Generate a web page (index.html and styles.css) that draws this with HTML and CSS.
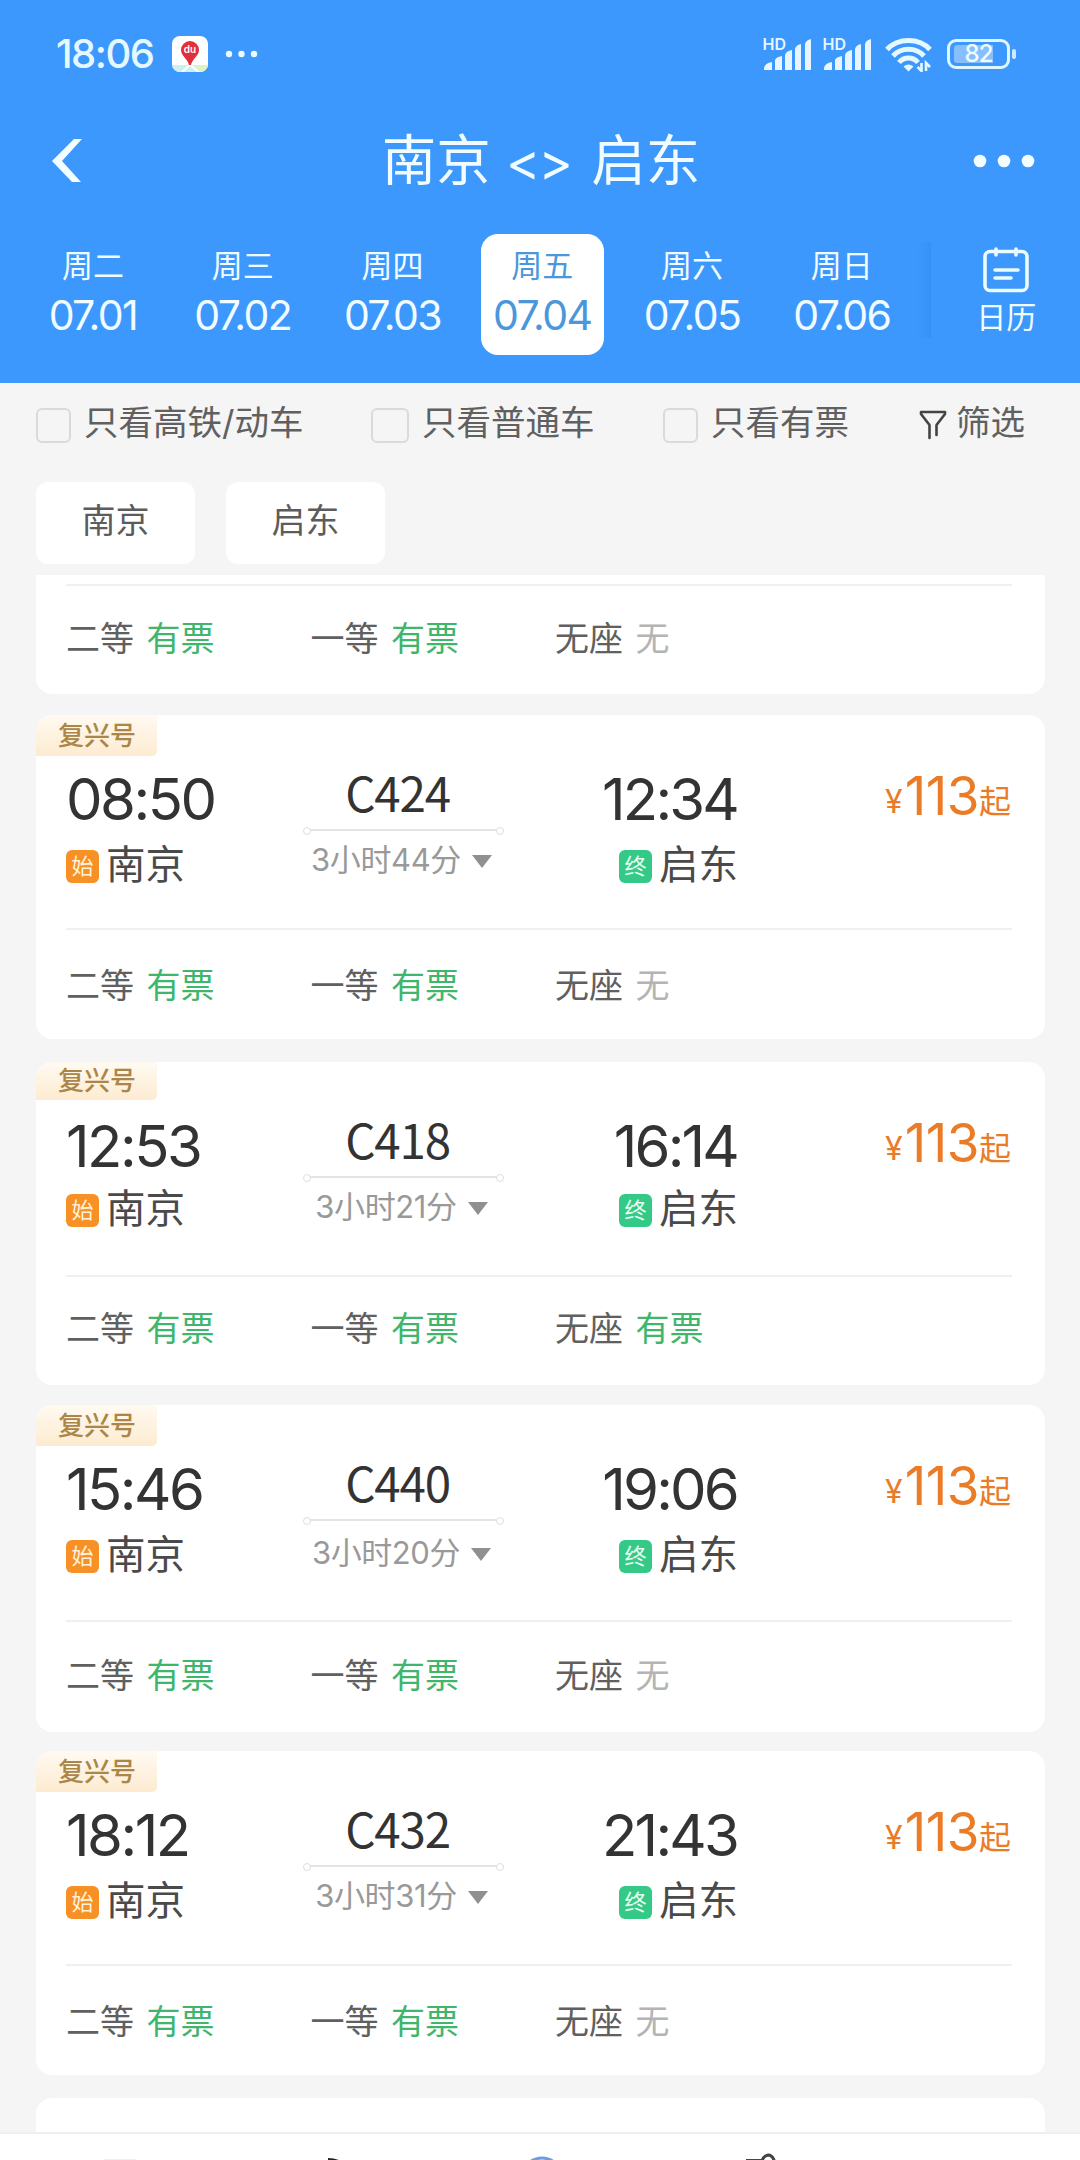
FILE: index.html
```html
<!DOCTYPE html>
<html lang="zh-CN">
<head>
    <meta charset="UTF-8" />
    <meta name="viewport" content="width=device-width, initial-scale=1.0" />
    <title>南京 - 启东</title>
    <link rel="stylesheet" href="styles.css">
</head>
<body>
  <header class="topo">
    <div class="status">
      <span class="hora">18:06</span>
      <svg class="app" width="36" height="36" viewBox="0 0 36 36">
        <rect width="36" height="36" rx="8" fill="#fff"/>
        <path d="M0 29h36a8 8 0 0 1-8 7H8a8 8 0 0 1-8-7z" fill="#cdeff0"/>
        <path d="M22 29h14a8 8 0 0 1-8 7z" fill="#dff3c0"/>
        <path d="M9 36l8-8h2l9 8h-3l-7-6-6 6z" fill="#fff"/>
        <path d="M18 5a9 9 0 0 1 9 9c0 6-7 9-8 15h-2c-1-6-8-9-8-15a9 9 0 0 1 9-9z" fill="#e0303a"/>
        <text x="18" y="17" text-anchor="middle" class="du">du</text>
      </svg>
      <svg class="pontos-status" width="34" height="8" viewBox="0 0 34 8" fill="#eaf8ff">
        <circle cx="4" cy="4" r="3.2"/><circle cx="16.5" cy="4" r="3.2"/><circle cx="29" cy="4" r="3.2"/>
      </svg>
      <div class="sinais">
        <svg width="52" height="44" viewBox="0 -4 52 44" fill="#e6f5ff">
          <text x="0.500" y="14" class="hd">HD</text>
          <path d="M2 34v-2q1-5 8-6v8q0 0-1 0H3q-1 0-1 0zM13 34V24q1-3 7-4v14zM23 34V19q1-4 7-5v20zM33 34V13q1-4 6-5v26zM43 34V8q1-4 6-5v31z"/>
        </svg>
        <svg width="52" height="44" viewBox="0 -4 52 44" fill="#e6f5ff">
          <text x="0.500" y="14" class="hd">HD</text>
          <path d="M2 34v-2q1-5 8-6v8q0 0-1 0H3q-1 0-1 0zM13 34V24q1-3 7-4v14zM23 34V19q1-4 7-5v20zM33 34V13q1-4 6-5v26zM43 34V8q1-4 6-5v31z"/>
        </svg>
        <svg class="wifi" width="47" height="36" viewBox="0 0 47 36" fill="none" stroke="#e6f8ff" stroke-width="5">
          <path d="M2 13.500C13 1.500 34 1.500 45 13.500M8 20c8-9 23-9 31 0M14 26.500c5-6 14-6 19 0"/>
          <path d="M18.500 30.500q5-4 10 0l-5 5z" fill="#e6f8ff" stroke="none"/>
          <path d="M36.500 27v8l-4-4M41 35v-8l4 4" stroke-width="2.600"/>
        </svg>
        <div class="bateria"><span>82</span></div>
      </div>
    </div>

    <div class="titulo">
      <svg width="32" height="46" viewBox="0 0 32 46" fill="#f4fdff">
        <path d="M22 1h8L10 23l19 21h-9L0 23z"/>
      </svg>
      <h1>南京 <span class="troca">&lt;&gt;</span> 启东</h1>
      <svg width="62" height="14" viewBox="0 0 62 14" fill="#f4fdff">
        <circle cx="7" cy="7" r="6.300"/><circle cx="31" cy="7" r="6.300"/><circle cx="55" cy="7" r="6.300"/>
      </svg>
    </div>

    <div class="datas">
      <div class="dia"><span>周二</span><b>07.01</b></div>
      <div class="dia"><span>周三</span><b>07.02</b></div>
      <div class="dia"><span>周四</span><b>07.03</b></div>
      <div class="dia ativo"><span>周五</span><b>07.04</b></div>
      <div class="dia"><span>周六</span><b>07.05</b></div>
      <div class="dia"><span>周日</span><b>07.06</b></div>
      <div class="sombra"></div>
      <div class="calendario">
        <svg width="46" height="46" viewBox="0 0 46 46" fill="none" stroke="#eafcff" stroke-width="3.600" stroke-linecap="round">
          <rect x="2" y="4.500" width="42" height="39" rx="5"/>
          <path d="M13 2v6M33 2v6M12 23h23M12 31h16"/>
        </svg>
        <span>日历</span>
      </div>
    </div>
  </header>

  <div class="filtros">
    <div class="opcao"><i class="caixa"></i>只看高铁/动车</div>
    <div class="opcao segunda"><i class="caixa larga"></i>只看普通车</div>
    <div class="opcao terceira"><i class="caixa"></i>只看有票</div>
    <div class="opcao filtrar">
      <svg width="28" height="30" viewBox="0 0 28 30" fill="none" stroke="#444" stroke-width="2.600" stroke-linejoin="round" stroke-linecap="round">
        <path d="M10.500 28V15L2 4V2h24v2l-8.500 11v10"/>
      </svg>筛选
    </div>
  </div>

  <div class="estacoes">
    <span>南京</span>
    <span>启东</span>
  </div>

  <main class="lista">
    <section class="cartao cortado">
      <div class="assentos">
        <span>二等 <em>有票</em></span><span>一等 <em>有票</em></span><span>无座 <em class="sem">无</em></span>
      </div>
    </section>

    <section class="cartao">
      <div class="selo">复兴号</div>
      <div class="viagem">
        <div class="saida">
          <div class="horario">08:50</div>
          <div class="local"><i>始</i>南京</div>
        </div>
        <div class="trem">
          <div class="codigo">C424</div>
          <div class="linha"></div>
          <div class="duracao">3小时44分<u></u></div>
        </div>
        <div class="chegada">
          <div class="horario">12:34</div>
          <div class="local fim"><i>终</i>启东</div>
        </div>
        <div class="preco"><small>¥</small>113<small>起</small></div>
      </div>
      <div class="assentos">
        <span>二等 <em>有票</em></span><span>一等 <em>有票</em></span><span>无座 <em class="sem">无</em></span>
      </div>
    </section>

    <section class="cartao baixo">
      <div class="selo">复兴号</div>
      <div class="viagem">
        <div class="saida">
          <div class="horario">12:53</div>
          <div class="local"><i>始</i>南京</div>
        </div>
        <div class="trem">
          <div class="codigo">C418</div>
          <div class="linha"></div>
          <div class="duracao">3小时21分<u></u></div>
        </div>
        <div class="chegada">
          <div class="horario">16:14</div>
          <div class="local fim"><i>终</i>启东</div>
        </div>
        <div class="preco"><small>¥</small>113<small>起</small></div>
      </div>
      <div class="assentos">
        <span>二等 <em>有票</em></span><span>一等 <em>有票</em></span><span>无座 <em>有票</em></span>
      </div>
    </section>

    <section class="cartao alto">
      <div class="selo">复兴号</div>
      <div class="viagem">
        <div class="saida">
          <div class="horario">15:46</div>
          <div class="local"><i>始</i>南京</div>
        </div>
        <div class="trem">
          <div class="codigo">C440</div>
          <div class="linha"></div>
          <div class="duracao">3小时20分<u></u></div>
        </div>
        <div class="chegada">
          <div class="horario">19:06</div>
          <div class="local fim"><i>终</i>启东</div>
        </div>
        <div class="preco"><small>¥</small>113<small>起</small></div>
      </div>
      <div class="assentos">
        <span>二等 <em>有票</em></span><span>一等 <em>有票</em></span><span>无座 <em class="sem">无</em></span>
      </div>
    </section>

    <section class="cartao">
      <div class="selo">复兴号</div>
      <div class="viagem">
        <div class="saida">
          <div class="horario">18:12</div>
          <div class="local"><i>始</i>南京</div>
        </div>
        <div class="trem">
          <div class="codigo">C432</div>
          <div class="linha"></div>
          <div class="duracao">3小时31分<u></u></div>
        </div>
        <div class="chegada">
          <div class="horario">21:43</div>
          <div class="local fim"><i>终</i>启东</div>
        </div>
        <div class="preco"><small>¥</small>113<small>起</small></div>
      </div>
      <div class="assentos">
        <span>二等 <em>有票</em></span><span>一等 <em>有票</em></span><span>无座 <em class="sem">无</em></span>
      </div>
    </section>

    <section class="cartao"></section>
  </main>

  <nav class="menu">
    <svg width="1080" height="27" viewBox="0 0 1080 27" fill="none" stroke-width="3">
      <path d="M104 26h32" stroke="#f0f0f0" stroke-width="2"/>
      <path d="M328 27v-3q7 0 13 3z" fill="#222"/>
      <circle cx="542" cy="44" r="20" stroke="#6f9be0"/>
      <path d="M746 26.500h16q2-5 6-5.500 4 0 6 5v3" stroke="#444"/>
    </svg>
  </nav>
</body>
</html>
```

FILE: styles.css
```css
* {
  box-sizing: border-box;
}

body {
  margin: 0;
  width: 1080px;
  height: 2160px;
  overflow: hidden;
  display: flex;
  flex-direction: column;
  background: #f5f5f5;
  color: #555;
  font-family: Inter, "Noto Sans CJK SC", sans-serif;
}

svg {
  display: block;
  flex-shrink: 0;
}

i, em, u {
  font-style: normal;
  text-decoration: none;
}

.topo {
  height: 383px;
  background: #3c98fc;
  color: #f0fcff;
  flex-shrink: 0;
}

/* barra de status */
.status {
  height: 108px;
  padding: 0 70px 0 56px;
  display: flex;
  align-items: center;
}

.hora {
  width: 116px;
  font-size: 40px;
  font-weight: 500;
  letter-spacing: -1.5px;
  line-height: 50px;
  color: #e6f8ff;
}

.pontos-status {
  margin-left: 17px;
}

.du {
  font-size: 10px;
  font-weight: 600;
  fill: #fff;
}

.hd {
  font-size: 16px;
  font-weight: 600;
}

.sinais {
  margin-left: auto;
  display: flex;
  align-items: center;
  gap: 8px;
}

.wifi {
  margin-left: 3px;
}

.bateria {
  width: 63px;
  height: 30px;
  margin-left: 7px;
  border: 3px solid #e0f6ff;
  border-radius: 9px;
  padding: 3px 4px;
  position: relative;
}

.bateria span {
  display: block;
  height: 18px;
  line-height: 18px;
  border-radius: 3px;
  text-align: center;
  font-size: 24px;
  font-weight: 500;
  letter-spacing: -1px;
  background: linear-gradient(90deg, #86bffc 80%, transparent 80%);
}

.bateria::after {
  content: "";
  position: absolute;
  right: -9px;
  top: 7px;
  width: 4px;
  height: 10px;
  border-radius: 2px;
  background: #cfeaff;
}

/* titulo */
.titulo {
  height: 106px;
  padding: 0 45px 0 52px;
  display: flex;
  align-items: center;
  justify-content: space-between;
}

.titulo h1 {
  margin: -3px 0 0 25px;
  font-size: 54.5px;
  font-weight: 400;
  line-height: 70px;
}

.troca {
  display: inline-block;
  width: 70px;
  font-size: 52px;
  letter-spacing: -2px;
  line-height: 66px;
}

/* datas */
.datas {
  display: flex;
  padding: 20px 0 0 18px;
}

.dia {
  width: 123px;
  height: 121px;
  margin: 0 13.4px;
  padding-top: 12px;
  border-radius: 17px;
  text-align: center;
}

.dia span {
  display: block;
  font-size: 31px;
  line-height: 40px;
}

.dia b {
  display: block;
  margin-top: 4px;
  font-size: 41px;
  font-weight: 400;
  letter-spacing: -1.6px;
  line-height: 50px;
}

.ativo {
  background: #fff;
  color: #4a97dc;
}

.sombra {
  width: 14px;
  height: 96px;
  margin: 8px 0 0 0;
  background: linear-gradient(90deg, rgba(40, 130, 235, 0), rgba(40, 130, 235, 0.3));
}

.calendario {
  flex: 1;
  padding: 13px 0 0 2px;
  display: flex;
  flex-direction: column;
  align-items: center;
}

.calendario span {
  margin-top: 4px;
  font-size: 30px;
  line-height: 40px;
}

/* filtros */
.filtros {
  height: 99px;
  padding: 0 0 20px 36px;
  display: flex;
  align-items: center;
  flex-shrink: 0;
  font-size: 34.5px;
  color: #606060;
}

.opcao {
  width: 335px;
  display: flex;
  align-items: center;
  flex-shrink: 0;
  line-height: 50px;
  white-space: nowrap;
}

.segunda {
  width: 292px;
}

.terceira {
  width: 256px;
}

.filtrar {
  width: auto;
}

.caixa {
  width: 35px;
  height: 35px;
  margin: 6px 13px 0 0;
  border: 2.5px solid #dadada;
  border-radius: 6px;
}

.larga {
  width: 38px;
}

.filtrar svg {
  margin: 4px 9px 0 0;
}

.estacoes {
  height: 93px;
  padding-left: 36px;
  display: flex;
  gap: 31px;
  flex-shrink: 0;
}

.estacoes span {
  width: 159px;
  height: 82px;
  line-height: 78px;
  border-radius: 12px;
  background: #fff;
  text-align: center;
  font-size: 34px;
  color: #5c5c5c;
}

/* lista de trens */
.lista {
  height: 1557px;
  padding: 0 35px 0 36px;
  overflow: hidden;
}

.cartao {
  height: 324px;
  margin-bottom: 23px;
  border-radius: 16px;
  background: #fff;
}

.cortado {
  height: 119px;
  margin-bottom: 21px;
  padding-top: 9px;
  border-radius: 0 0 16px 16px;
}

.baixo {
  height: 323px;
  margin-bottom: 20px;
}

.alto {
  height: 327px;
  margin-bottom: 19px;
}

.selo {
  width: 121px;
  height: 41px;
  padding-left: 22px;
  border-radius: 16px 0 5px 0;
  background: linear-gradient(#fffaf2, #fdebd0);
  color: #ab8647;
  font-size: 26px;
  font-weight: 500;
  line-height: 41px;
}

.baixo .selo {
  height: 38px;
  margin-bottom: 3px;
  line-height: 38px;
}

.viagem {
  height: 172px;
  margin: 0 33px 0 30px;
  display: grid;
  grid-template-columns: 237px 201px 232px 1fr;
}

.alto .viagem {
  height: 174px;
}

.horario {
  height: 88px;
  font-size: 58px;
  line-height: 86px;
  letter-spacing: -2.5px;
  color: #333;
}

.local {
  display: flex;
  align-items: center;
  gap: 7px;
  margin-top: -4px;
  height: 50px;
  line-height: 50px;
  font-size: 39.5px;
  color: #4a4a4a;
}

.baixo .local {
  margin-top: -7px;
}

.local i {
  width: 33px;
  height: 33px;
  margin-top: 2px;
  border-radius: 6px;
  background: #f79025;
  color: #fff2d8;
  text-align: center;
  font-size: 22px;
  line-height: 32px;
}

.local.fim i {
  background: #34c986;
  color: #e8fff2;
}

.chegada {
  text-align: right;
}

.chegada .horario {
  margin-right: -1px;
  letter-spacing: -2.8px;
}

.chegada .local {
  justify-content: flex-end;
  margin-right: -2px;
}

.codigo {
  padding-top: 11px;
  height: 74px;
  line-height: 50px;
  font-family: "Noto Sans CJK SC", sans-serif;
  font-size: 47.5px;
  letter-spacing: -1.2px;
  text-align: center;
  color: #333;
  margin-right: 12px;
}

.linha {
  height: 2px;
  margin: -1px 5px 0;
  background: #e4e4e4;
  position: relative;
}

.linha::before,
.linha::after {
  content: "";
  position: absolute;
  top: -2px;
  width: 6px;
  height: 6px;
  border: 1.5px solid #dedede;
  border-radius: 50%;
  background: #fff;
}

.linha::before {
  left: -5px;
}

.linha::after {
  right: -5px;
}

.duracao {
  display: flex;
  align-items: center;
  justify-content: center;
  gap: 11px;
  margin: 9px 4px 0 0;
  height: 40px;
  line-height: 40px;
  font-size: 31px;
  letter-spacing: -0.4px;
  white-space: nowrap;
  color: #999;
}

.alto .duracao {
  margin-top: 12px;
}

.duracao u {
  margin-top: 2px;
  border: 10px solid transparent;
  border-top: 13px solid #909090;
  border-bottom: 0;
}

.preco {
  display: flex;
  justify-content: flex-end;
  align-items: baseline;
  height: 60px;
  padding: 10px 1px 0 0;
  font-size: 53px;
  line-height: 60px;
  letter-spacing: -0.5px;
  color: #ea7c28;
}

.preco small {
  font-size: 32px;
  letter-spacing: 0;
  position: relative;
  top: -2px;
}

.preco small:first-child {
  margin-right: 2px;
}

.assentos {
  display: grid;
  grid-template-columns: repeat(3, 244.5px);
  margin: 0 33px 0 30px;
  padding-top: 28px;
  border-top: 2px solid #f0f0f0;
  font-size: 34px;
  line-height: 56px;
  color: #606060;
}

.cortado .assentos {
  padding-top: 25px;
}

.baixo .assentos {
  padding-top: 24px;
}

.alto .assentos {
  padding-top: 26px;
}

.assentos em {
  margin-left: 3px;
  color: #40b56c;
}

.assentos .sem {
  color: #b4b4b4;
}

.menu {
  height: 28px;
  border-top: 2px solid #efefef;
  background: #fff;
  flex-shrink: 0;
  overflow: hidden;
}
```
